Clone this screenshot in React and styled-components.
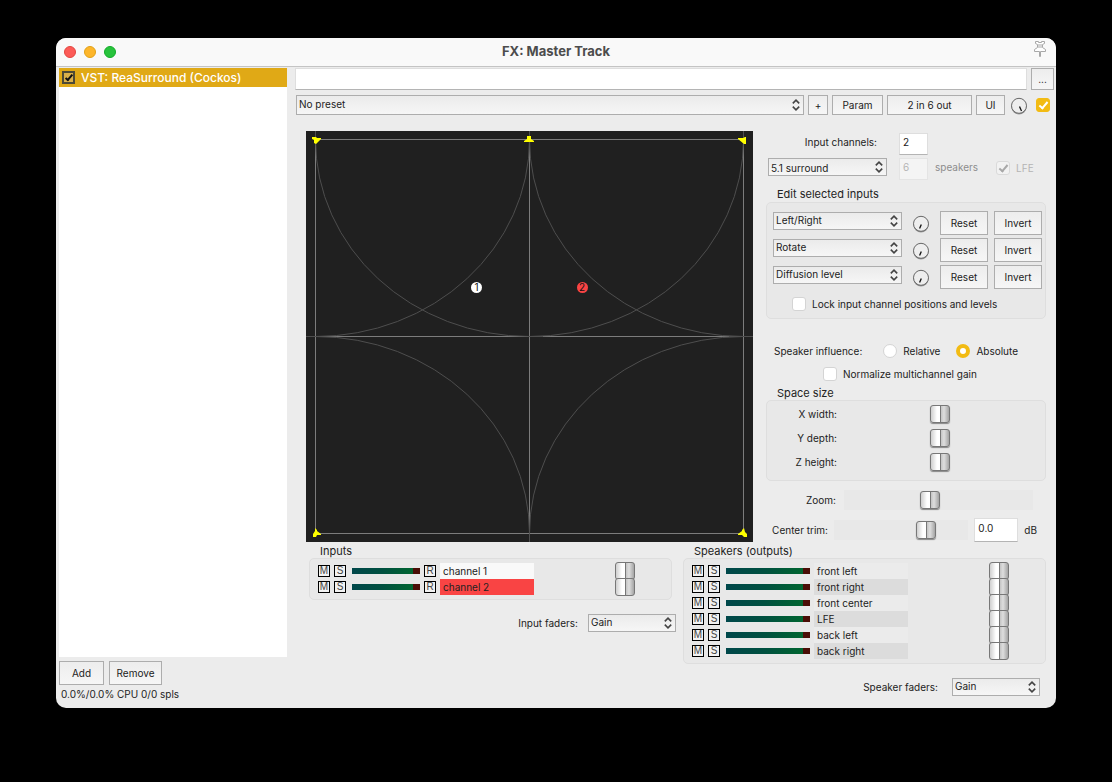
import React from 'react';
import styled, { createGlobalStyle, css } from 'styled-components';

const GlobalStyle = createGlobalStyle`
  *, *::before, *::after { box-sizing: border-box; }
  body {
    margin: 0;
    background: #000;
    color: #222;
    font: 10px/14px Inter, "Liberation Sans", sans-serif;
  }
  button, input, select { font: inherit; color: inherit; margin: 0; }
`;

/* ---------- window ---------- */

const Desktop = styled.div`
  display: flex;
  min-height: 100vh;
  padding: 38px 56px 74px;
`;

const Window = styled.main`
  display: flex;
  flex: 1;
  flex-direction: column;
  min-width: 0;
  overflow: hidden;
  border-radius: 10px;
  background: #ececec;
`;

const TitleBar = styled.header`
  display: grid;
  grid-template-columns: 1fr auto 1fr;
  align-items: center;
  height: 29px;
  padding: 0 8px;
  border-bottom: 1px solid #c4c4c4;
  background: #f9f9f9;
`;

const Lights = styled.div`
  display: flex;
  gap: 8px;
`;

const Light = styled.button`
  width: 12px;
  height: 12px;
  padding: 0;
  border: 1px solid ${(p) => p.$edge};
  border-radius: 50%;
  background: ${(p) => p.$color};
`;

const Title = styled.h1`
  margin: 0;
  padding-bottom: 2px;
  color: #4c4c4c;
  font-size: 13px;
  font-weight: 700;
  line-height: 16px;
`;

const PinButton = styled.button`
  justify-self: end;
  height: 20px;
  padding: 0;
  border: 0;
  background: none;
  align-self: start;
`;

const Body = styled.div`
  display: grid;
  flex: 1;
  grid-template-columns: 228px minmax(0, 1fr);
  gap: 8px;
  padding: 1px 2px 7px 3px;
`;

/* ---------- controls ---------- */

const Button = styled.button`
  height: ${(p) => p.$h || 24}px;
  width: ${(p) => p.$w}px;
  padding: 0;
  border: 1px solid #adadad;
  background: linear-gradient(#ededed, #f6f6f6);
  white-space: nowrap;
`;

const SelectBox = styled.div`
  position: relative;
  width: ${(p) => (p.$w ? `${p.$w}px` : 'auto')};
  flex: ${(p) => (p.$w ? 'none' : '1')};

  select {
    display: block;
    width: 100%;
    height: ${(p) => p.$h || 18}px;
    padding: 0 16px 2px 2px;
    border: 1px solid #adadad;
    border-radius: 0;
    background: linear-gradient(#ebebeb, #f6f6f6);
    appearance: none;
  }

  svg {
    position: absolute;
    top: 50%;
    right: 4px;
    transform: translateY(-50%);
    pointer-events: none;
  }
`;

const TextBox = styled.input`
  width: ${(p) => p.$w}px;
  height: ${(p) => p.$h || 22}px;
  padding: 0 3px 4px;
  border: 1px solid #dedede;
  border-bottom-color: #b4b4b4;
  border-radius: 0;
  background: #fff;

  &:disabled {
    border-color: #e4e4e4;
    background: #f4f4f4;
    color: #b4b4b4;
  }
`;

const Tick = styled.input`
  display: grid;
  flex: none;
  place-content: center;
  width: 14px;
  height: 14px;
  border: 1px solid #d4d4d4;
  border-radius: ${(p) => (p.type === 'radio' ? '50%' : '3px')};
  background: #fff;
  appearance: none;

  &[type='radio']:checked {
    border: 4px solid #f2bb13;
  }

  &[type='checkbox']:checked::before {
    content: '';
    width: 5px;
    height: 9px;
    margin-top: -2px;
    border: solid #fff;
    border-width: 0 2px 2px 0;
    transform: rotate(40deg);
  }

  &[type='checkbox']:checked {
    border-color: #f2bb13;
    background: #f2bb13;
  }

  &[type='checkbox']:disabled {
    border-color: #dadada;
    background: #f2f2f2;
  }

  &[type='checkbox']:disabled::before {
    border-color: #a8a8a8;
  }
`;

const CheckLabel = styled.label`
  display: flex;
  align-items: center;
  gap: 6px;
  color: ${(p) => (p.$dim ? '#b4b4b4' : 'inherit')};
`;

const KnobBox = styled.span`
  position: relative;
  display: block;
  width: 18px;
  height: 18px;

  svg { display: block; }

  input {
    position: absolute;
    inset: 0;
    width: 100%;
    height: 100%;
    opacity: 0;
  }
`;

const thumb = css`
  width: 20px;
  height: 18px;
  border: 1px solid #777;
  border-radius: 3px;
  background:
    linear-gradient(90deg, transparent 9px, #777 9px, #777 10px, transparent 10px),
    linear-gradient(90deg, #cfcfcf, #fff 6px, #fff 9px, #c4c4c4 10px, #dedede 13px, #a4a4a4);
  box-shadow: ${(p) => (p.$flat ? 'none' : '0 1px 1px #888')};
  appearance: none;
`;

const Fader = styled.input`
  flex: 1;
  min-width: 0;
  height: ${(p) => (p.$flat ? 16 : 20)}px;
  background: ${(p) => (p.$flat ? 'transparent' : '#e8e8e8')};
  appearance: none;

  &::-webkit-slider-thumb { ${thumb} }
  &::-moz-range-thumb { ${thumb} }
`;

function Select({ w, h, label, id, options }) {
  return (
    <SelectBox $w={w} $h={h}>
      <select id={id} aria-label={label}>
        {options.map((o) => <option key={o}>{o}</option>)}
      </select>
      <svg width="8" height="12" viewBox="0 0 8 12" fill="none" stroke="#444" strokeWidth="1.6">
        <path d="M.8 4.4 4 1.2l3.200 3.200M.8 7.600 4 10.800l3.200-3.200" />
      </svg>
    </SelectBox>
  );
}

function Knob({ label, right }) {
  return (
    <KnobBox>
      <svg width="18" height="18" viewBox="0 0 18 18">
        <circle cx="9" cy="9.800" r="7.600" fill="#999" />
        <circle cx="9" cy="8.800" r="7.500" fill="#eee" stroke="#666" />
        <path d={right ? 'M9.500 9.500 11.500 14' : 'M9.300 9.500 7.600 13.500'} stroke="#111" strokeWidth="1.300" />
      </svg>
      <input type="range" aria-label={label} />
    </KnobBox>
  );
}

/* ---------- effect list ---------- */

const Sidebar = styled.section`
  display: flex;
  flex-direction: column;
`;

const EffectList = styled.div`
  flex: 1;
  background: #fff;
`;

const Effect = styled.label`
  display: flex;
  align-items: center;
  gap: 6px;
  height: 19px;
  padding-left: 3px;
  background: #e0a916;
  color: #fff;
  font-size: 12px;
  font-weight: 500;
`;

const EffectTick = styled.input`
  display: grid;
  place-content: center;
  width: 13px;
  height: 13px;
  border: 2px solid #4d4a35;
  background: #d9b04a;
  appearance: none;

  &:checked::before {
    content: '';
    width: 4px;
    height: 8px;
    margin-top: -2px;
    border: solid #111;
    border-width: 0 2px 2px 0;
    transform: rotate(40deg);
  }
`;

const ListActions = styled.div`
  display: flex;
  gap: 5px;
  padding-top: 4px;
`;

const Status = styled.p`
  margin: 2px 0 0 2px;
`;

/* ---------- main panel ---------- */

const Panel = styled.section`
  display: flex;
  flex-direction: column;
  min-width: 0;
`;

const CommentRow = styled.div`
  display: flex;
  gap: 4px;

  input { flex: 1; min-width: 0; }
`;

const PresetRow = styled.div`
  display: flex;
  align-items: center;
  gap: 4px;
  padding: 5px 4px 0 1px;

  ${KnobBox} { margin: 2px 4px 0 1px; }
`;

const Upper = styled.div`
  display: grid;
  grid-template-columns: minmax(0, 1fr) 280px;
  gap: 13px;
  padding: 16px 8px 0 11px;
`;

const Plot = styled.svg`
  display: block;
  width: 100%;
  height: auto;
  background: #202020;
`;

const Settings = styled.div`
  display: flex;
  flex-direction: column;
`;

const SetupGrid = styled.div`
  display: grid;
  grid-template-columns: 119px 29px auto 1fr;
  align-items: start;
  gap: 3px 12px;
  padding: 2px 0 0 2px;
  line-height: 18px;

  ${CheckLabel} { height: 20px; }
`;

const RightLabel = styled.label`
  justify-self: end;
  padding-right: 10px;
`;

const Unit = styled.span`
  padding-right: 6px;
  margin-left: -5px;
  color: #8c8c8c;
`;

const GroupTitle = styled.h2`
  margin: 0;
  padding-left: 11px;
  font-size: 11px;
  font-weight: 400;
  line-height: 14px;
`;

const Group = styled.div`
  border: 1px solid #dedede;
  border-radius: 5px;
  background: #e8e8e8;
  padding: ${(p) => p.$pad || '4px 8px'};
`;

const EditRow = styled.div`
  display: grid;
  grid-template-columns: 129px 1fr 48px 48px;
  align-items: center;
  justify-items: center;
  gap: 6px;
  height: 27px;

  ${SelectBox} { margin-bottom: 3px; }
  ${KnobBox} { margin-top: 2px; }
`;

const Line = styled.div`
  display: flex;
  align-items: center;
  gap: ${(p) => p.$gap || 8}px;
  height: ${(p) => p.$h || 24}px;
  padding: ${(p) => p.$pad || '0'};
`;

const RadioCaption = styled.span`
  padding-right: 5px;
`;

const SliderLabel = styled.label`
  width: ${(p) => p.$w}px;
  text-align: right;
`;

/* ---------- channel strips ---------- */

const Lower = styled.div`
  display: grid;
  grid-template-columns: minmax(0, 367fr) minmax(0, 363fr);
  gap: 7px;
  padding: 2px 8px 0 14px;
`;

const InputGroup = styled(Group)`
  margin-right: 4px;
`;

const Strip = styled.div`
  display: flex;
  align-items: center;
  gap: 4px;
  height: 16px;
`;

const Toggle = styled.button`
  width: 12px;
  height: 12px;
  padding: 0;
  border: 1px solid #000;
  background: #f2f2f2;
  color: #444;
  font: 10px/10px "Liberation Sans", sans-serif;
`;

const Meter = styled.span`
  width: ${(p) => p.$w}px;
  height: 6px;
  margin-left: 2px;
  border-right: 7px solid #4a0d06;
  background: linear-gradient(90deg, #00474a, #005040 50%, #006530);
`;

const Name = styled.span`
  width: 94px;
  height: 16px;
  margin-right: -4px;
  padding-left: 3px;
  background: ${(p) => p.$bg};
  line-height: 16px;
`;

const FaderMode = styled.div`
  display: flex;
  align-items: center;
  justify-content: flex-end;
  gap: ${(p) => p.$gap}px;
  padding: ${(p) => p.$pad};
`;

function ChannelStrip({ name, bg, meter, record }) {
  return (
    <Strip>
      <Toggle aria-label={`Mute ${name}`}>M</Toggle>
      <Toggle aria-label={`Solo ${name}`}>S</Toggle>
      <Meter $w={meter} />
      {record && <Toggle aria-label={`Route ${name}`}>R</Toggle>}
      <Name $bg={bg}>{name}</Name>
      <Fader $flat type="range" defaultValue="74" aria-label={`${name} gain`} />
    </Strip>
  );
}

function SpeakerPlot() {
  return (
    <Plot viewBox="0 0 447 411" role="img" aria-label="Speaker placement">
      <g fill="none" stroke="#7c7c7c">
        <path d="M9.500 8.500H437.500V402.500H9.500ZM223.500 8.500V402.500M9.500 205.500H437.500" />
      </g>
      <g fill="none" stroke="#4e4e4e">
        <path d="M9.500 0V8.500A214 197 0 0 0 223.500 205.500H237M423 205.500H447" />
        <path d="M437.500 0V8.500A214 197 0 0 1 223.500 205.500" />
        <path d="M223.500 0V8.500A214 197 0 0 1 9.500 205.500H0" />
        <path d="M223.500 8.500A214 197 0 0 0 437.500 205.500" />
        <path d="M9.500 205.500A214 197 0 0 1 223.500 402.500V411" />
        <path d="M437.500 205.500A214 197 0 0 0 223.500 402.500" />
      </g>
      <g fill="#ff0">
        <path d="M6 6h4l1 1h4v1l-5 5-2-1V9L6 8Z" />
        <path d="M221 5h4v3l3 2v1h-10v-1l3-2Z" />
        <path d="M440 6h-1l-2 1h-5v1l6 5h2V6Z" />
        <path d="M9 397l2 2v1l4 3v1h-4l-1 2H7v-3l2-3Z" />
        <path d="M438 397l-2 2v1l-4 3v1h4l2 2h3v-3l-2-2Z" />
      </g>
      <circle cx="170.500" cy="156.500" r="5.500" fill="#fff" />
      <text x="170.500" y="160" textAnchor="middle" fontSize="10" fill="#111">1</text>
      <circle cx="276.500" cy="156.500" r="5.500" fill="#f94444" />
      <text x="276" y="160" textAnchor="middle" fontSize="10" fill="#111">2</text>
    </Plot>
  );
}

const EDITS = ['Left/Right', 'Rotate', 'Diffusion level'];
const SPACE = ['X width:', 'Y depth:', 'Z height:'];
const SPEAKERS = ['front left', 'front right', 'front center', 'LFE', 'back left', 'back right'];

export default function App() {
  return (
    <>
      <GlobalStyle />
      <Desktop>
        <Window>
          <TitleBar>
            <Lights>
              <Light $color="#fc5b57" $edge="#e2463f" aria-label="Close" />
              <Light $color="#fdb62b" $edge="#e1a116" aria-label="Minimize" />
              <Light $color="#28c33d" $edge="#12ac28" aria-label="Zoom window" />
            </Lights>
            <Title>FX: Master Track</Title>
            <PinButton aria-label="Keep on top">
              <svg width="16" height="20" viewBox="0 0 16 20" fill="#fff" stroke="#a8a8a8">
                <path d="M3.500 3.500h3v1h3v-1h3v2l-2 1v3l3 2v2h-5v5h-1v-5h-5v-2l3-2v-3l-2-1ZM7 6v4M9 6v4" />
              </svg>
            </PinButton>
          </TitleBar>

          <Body>
            <Sidebar>
              <EffectList>
                <Effect>
                  <EffectTick type="checkbox" defaultChecked />
                  VST: ReaSurround (Cockos)
                </Effect>
              </EffectList>
              <ListActions>
                <Button $w={45}>Add</Button>
                <Button $w={53}>Remove</Button>
              </ListActions>
              <Status>0.0%/0.0% CPU 0/0 spls</Status>
            </Sidebar>

            <Panel>
              <CommentRow>
                <TextBox aria-label="Comment" />
                <Button $w={23} $h={22}>...</Button>
              </CommentRow>
              <PresetRow>
                <Select h={20} label="Preset" options={['No preset']} />
                <Button $w={20} $h={20}>+</Button>
                <Button $w={51} $h={20}>Param</Button>
                <Button $w={85} $h={20}>2 in 6 out</Button>
                <Button $w={29} $h={20}>UI</Button>
                <Knob label="Wet mix" right />
                <Tick type="checkbox" defaultChecked aria-label="Enabled" />
              </PresetRow>

              <Upper>
                <SpeakerPlot />
                <Settings>
                  <SetupGrid>
                    <RightLabel htmlFor="inputs">Input channels:</RightLabel>
                    <TextBox $w={29} id="inputs" defaultValue="2" />
                    <span />
                    <span />
                    <Select w={119} label="Layout" options={['5.1 surround']} />
                    <TextBox $w={29} defaultValue="6" disabled aria-label="Speaker count" />
                    <Unit>speakers</Unit>
                    <CheckLabel $dim>
                      <Tick type="checkbox" defaultChecked disabled />
                      LFE
                    </CheckLabel>
                  </SetupGrid>

                  <Line $h={22} $pad="6px 0 0">
                    <GroupTitle>Edit selected inputs</GroupTitle>
                  </Line>
                  <Group $pad="6px 3px 0 6px">
                    {EDITS.map((name) => (
                      <EditRow key={name}>
                        <Select w={129} label={name} options={[name]} />
                        <Knob label={`${name} amount`} />
                        <Button $w={48}>Reset</Button>
                        <Button $w={48}>Invert</Button>
                      </EditRow>
                    ))}
                    <Line $h={28} $pad="0 19px">
                      <CheckLabel>
                        <Tick type="checkbox" />
                        Lock input channel positions and levels
                      </CheckLabel>
                    </Line>
                  </Group>

                  <Line $gap={16} $h={43} $pad="21px 0 0 8px">
                    <RadioCaption>Speaker influence:</RadioCaption>
                    <CheckLabel>
                      <Tick type="radio" name="influence" />
                      Relative
                    </CheckLabel>
                    <CheckLabel>
                      <Tick type="radio" name="influence" defaultChecked />
                      Absolute
                    </CheckLabel>
                  </Line>
                  <Line $pad="0 57px">
                    <CheckLabel>
                      <Tick type="checkbox" />
                      Normalize multichannel gain
                    </CheckLabel>
                  </Line>
                  <GroupTitle>Space size</GroupTitle>
                  <Group $pad="1px 8px 6px 0">
                    {SPACE.map((name, i) => (
                      <Line key={name} $gap={6}>
                        <SliderLabel $w={70} htmlFor={`space${i}`}>{name}</SliderLabel>
                        <Fader type="range" id={`space${i}`} />
                      </Line>
                    ))}
                  </Group>
                  <Line $h={37} $pad="0 13px 0 0">
                    <SliderLabel $w={70} htmlFor="zoom">Zoom:</SliderLabel>
                    <Fader type="range" id="zoom" defaultValue="45" />
                  </Line>
                  <Line $gap={6} $pad="0 9px 0 0">
                    <SliderLabel $w={62} htmlFor="trim">Center trim:</SliderLabel>
                    <Fader type="range" id="trim" defaultValue="72" />
                    <TextBox $w={44} $h={24} defaultValue="0.0" aria-label="Center trim value" />
                    <span>dB</span>
                  </Line>
                </Settings>
              </Upper>

              <Lower>
                <div>
                  <GroupTitle>Inputs</GroupTitle>
                  <InputGroup>
                    <ChannelStrip name="channel 1" bg="#f9f9f9" meter={68} record />
                    <ChannelStrip name="channel 2" bg="#f94444" meter={68} record />
                  </InputGroup>
                  <FaderMode $gap={10} $pad="14px 0 0">
                    <label htmlFor="inputFaders">Input faders:</label>
                    <Select w={88} id="inputFaders" options={['Gain']} />
                  </FaderMode>
                </div>
                <div>
                  <GroupTitle>Speakers (outputs)</GroupTitle>
                  <Group>
                    {SPEAKERS.map((name, i) => (
                      <ChannelStrip key={name} name={name} bg={i % 2 ? '#dcdcdc' : '#ebebeb'} meter={84} />
                    ))}
                  </Group>
                  <FaderMode $gap={14} $pad="14px 6px 0 0">
                    <label htmlFor="speakerFaders">Speaker faders:</label>
                    <Select w={88} id="speakerFaders" options={['Gain']} />
                  </FaderMode>
                </div>
              </Lower>
            </Panel>
          </Body>
        </Window>
      </Desktop>
    </>
  );
}
